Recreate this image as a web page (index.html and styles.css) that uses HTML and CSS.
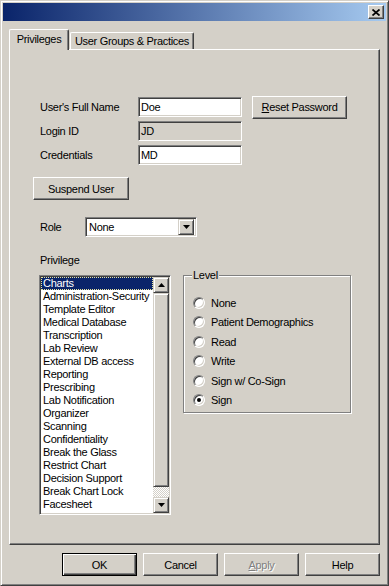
FILE: index.html
```html
<!DOCTYPE html>
<html lang="en">
<head>
    <meta charset="UTF-8">
    <title>User Properties</title>
    <link rel="stylesheet" href="styles.css">
</head>
<body>
    <div class="window">
        <!-- Title bar -->
        <div class="titlebar">
            <button class="close-btn">
                <svg width="8" height="7" viewBox="0 0 8 7"><path d="M0.5 0.5 L7.5 6.5 M7.5 0.5 L0.5 6.5" stroke="#000" stroke-width="1.7" fill="none"/></svg>
            </button>
        </div>

        <div class="dialog-body">
            <div class="tabs">
                <div class="tab active">Privileges</div>
                <div class="tab">User Groups &amp; Practices</div>
            </div>

            <div class="panel">
                <div class="user-form">
                    <div class="form-row">
                        <label>User's Full Name</label>
                        <div class="field">Doe</div>
                        <button class="btn reset-btn"><u>R</u>eset Password</button>
                    </div>
                    <div class="form-row">
                        <label>Login ID</label>
                        <div class="field readonly">JD</div>
                    </div>
                    <div class="form-row">
                        <label>Credentials</label>
                        <div class="field">MD</div>
                    </div>
                </div>

                <button class="btn suspend-btn">Suspend User</button>

                <div class="role-row">
                    <label>Role</label>
                    <div class="combo">
                        <span class="combo-value">None</span>
                        <span class="combo-arrow">
                            <svg width="7" height="4" viewBox="0 0 7 4"><polygon points="0,0 7,0 3.5,4" fill="#000"/></svg>
                        </span>
                    </div>
                </div>

                <div class="privilege-label">Privilege</div>

                <div class="privilege-row">
                    <div class="listbox">
                        <ul class="list-items">
                            <li class="selected">Charts</li>
                            <li>Administration-Security</li>
                            <li>Template Editor</li>
                            <li>Medical Database</li>
                            <li>Transcription</li>
                            <li>Lab Review</li>
                            <li>External DB access</li>
                            <li>Reporting</li>
                            <li>Prescribing</li>
                            <li>Lab Notification</li>
                            <li>Organizer</li>
                            <li>Scanning</li>
                            <li>Confidentiality</li>
                            <li>Break the Glass</li>
                            <li>Restrict Chart</li>
                            <li>Decision Support</li>
                            <li>Break Chart Lock</li>
                            <li>Facesheet</li>
                            <li>Preferences Manager</li>
                        </ul>
                        <div class="scrollbar">
                            <div class="sb-btn">
                                <svg width="7" height="4" viewBox="0 0 7 4"><polygon points="3.5,0 7,4 0,4" fill="#000"/></svg>
                            </div>
                            <div class="sb-thumb"></div>
                            <div class="sb-track"></div>
                            <div class="sb-btn">
                                <svg width="7" height="4" viewBox="0 0 7 4"><polygon points="0,0 7,0 3.5,4" fill="#000"/></svg>
                            </div>
                        </div>
                    </div>

                    <div class="groupbox">
                        <span class="group-title">Level</span>
                        <div class="radio-item"><span class="radio"></span>None</div>
                        <div class="radio-item"><span class="radio"></span>Patient Demographics</div>
                        <div class="radio-item"><span class="radio"></span>Read</div>
                        <div class="radio-item"><span class="radio"></span>Write</div>
                        <div class="radio-item"><span class="radio"></span>Sign w/ Co-Sign</div>
                        <div class="radio-item"><span class="radio checked"></span>Sign</div>
                    </div>
                </div>
            </div>

            <div class="dialog-buttons">
                <button class="btn dlg-btn default">OK</button>
                <button class="btn dlg-btn">Cancel</button>
                <button class="btn dlg-btn disabled"><u>A</u>pply</button>
                <button class="btn dlg-btn">Help</button>
            </div>
        </div>
    </div>
</body>
</html>
```

FILE: styles.css
```css
body {
    margin: 0;
    padding: 0;
    background: #d4d0c8;
}

.window {
    box-sizing: border-box;
    width: 389px;
    height: 586px;
    padding: 2px;
    background: #d4d0c8;
    border: 1px solid;
    border-color: #d4d0c8 #404040 #404040 #d4d0c8;
    box-shadow: inset 1px 1px #fff, inset -1px -1px #808080;
    font-family: "Liberation Sans", Arial, sans-serif;
    font-size: 11px;
    letter-spacing: -0.3px;
    color: #000;
}

.titlebar {
    height: 18px;
    display: flex;
    justify-content: flex-end;
    align-items: center;
    padding-right: 2px;
    background: linear-gradient(to right, #0a246a, #a6caf0);
}

.close-btn {
    box-sizing: border-box;
    width: 16px;
    height: 14px;
    padding: 0;
    display: flex;
    justify-content: center;
    align-items: center;
    background: #d4d0c8;
    border: 1px solid;
    border-color: #fff #404040 #404040 #fff;
    box-shadow: inset -1px -1px #808080;
}

.dialog-body {
    padding: 8px 6px 0;
}

/* tabs */
.tabs {
    display: flex;
    align-items: flex-end;
    height: 20px;
}

.tab {
    box-sizing: border-box;
    width: 124px;
    height: 17px;
    margin-left: 1px;
    padding-top: 2px;
    line-height: 13px;
    text-align: center;
    border: 1px solid;
    border-bottom: none;
    border-color: #fff #404040 #404040 #fff;
    border-radius: 2px 2px 0 0;
    box-shadow: inset -1px 0 #808080;
}

.tab.active {
    position: relative;
    z-index: 1;
    width: 60px;
    height: 21px;
    margin: 0 0 -1px;
    padding-top: 3px;
    background: #d4d0c8;
}

.panel {
    box-sizing: border-box;
    width: 371px;
    height: 496px;
    border: 1px solid;
    border-color: #fff #404040 #404040 #fff;
    box-shadow: inset -1px -1px #808080;
}

/* buttons */
.btn {
    box-sizing: border-box;
    height: 23px;
    padding: 0;
    background: #d4d0c8;
    color: #000;
    font: inherit;
    letter-spacing: inherit;
    border: 1px solid;
    border-color: #fff #404040 #404040 #fff;
    box-shadow: inset -1px -1px #808080;
}

.btn.default {
    border-color: #000;
    box-shadow: inset 1px 1px #fff, inset -1px -1px #404040, inset -2px -2px #808080;
}

.btn.disabled {
    color: #808080;
    text-shadow: 1px 1px #fff;
}

/* user fields */
.user-form {
    display: flex;
    flex-direction: column;
    gap: 4px;
    margin: 47px 0 0 30px;
}

.form-row {
    display: flex;
    align-items: center;
    height: 20px;
}

.form-row label {
    width: 98px;
}

.field,
.combo {
    box-sizing: border-box;
    height: 20px;
    background: #fff;
    border: 1px solid;
    border-color: #808080 #fff #fff #808080;
    box-shadow: inset 1px 1px #404040, inset -1px -1px #d4d0c8;
}

.field {
    width: 104px;
    padding: 2px 0 0 2px;
    line-height: 14px;
}

.field.readonly {
    background: #d4d0c8;
}

.reset-btn {
    width: 95px;
    margin-left: 10px;
}

.suspend-btn {
    display: block;
    width: 96px;
    margin: 12px 0 0 23px;
}

/* role */
.role-row {
    display: flex;
    align-items: center;
    margin: 17px 0 0 30px;
}

.role-row label {
    width: 45px;
}

.combo {
    width: 112px;
    display: flex;
    align-items: center;
    justify-content: space-between;
    padding: 0 2px 0 3px;
}

.combo-arrow,
.sb-btn {
    box-sizing: border-box;
    width: 16px;
    height: 16px;
    display: flex;
    justify-content: center;
    align-items: center;
    background: #d4d0c8;
    border: 1px solid;
    border-color: #d4d0c8 #404040 #404040 #d4d0c8;
    box-shadow: inset 1px 1px #fff, inset -1px -1px #808080;
}

/* privilege list */
.privilege-label {
    margin: 17px 0 0 30px;
    line-height: 13px;
}

.privilege-row {
    display: flex;
    align-items: flex-start;
    margin: 8px 0 0 29px;
}

.listbox {
    box-sizing: border-box;
    width: 132px;
    height: 240px;
    display: flex;
    background: #fff;
    border: 1px solid;
    border-color: #808080 #fff #fff #808080;
    box-shadow: inset 1px 1px #404040, inset -1px -1px #d4d0c8;
    padding: 1px;
}

.list-items {
    flex: 1;
    margin: 0;
    padding: 0;
    list-style: none;
    overflow: hidden;
    line-height: 13px;
    white-space: nowrap;
}

.list-items li {
    height: 13px;
    padding-left: 2px;
}

.list-items li.selected {
    background: #0a246a;
    color: #fff;
    outline: 1px dotted #e8e4a0;
    outline-offset: -1px;
}

.scrollbar {
    width: 16px;
    display: flex;
    flex-direction: column;
}

.sb-thumb {
    box-sizing: border-box;
    height: 194px;
    background: #d4d0c8;
    border: 1px solid;
    border-color: #d4d0c8 #404040 #404040 #d4d0c8;
    box-shadow: inset 1px 1px #fff, inset -1px -1px #808080;
}

.sb-track {
    height: 10px;
    background: repeating-conic-gradient(#fff 0 25%, #d4d0c8 0 50%) 0 0 / 2px 2px;
}

/* level group */
.groupbox {
    position: relative;
    box-sizing: border-box;
    width: 168px;
    height: 138px;
    margin-left: 12px;
    padding: 17px 0 0 9px;
    border: 1px solid #808080;
    box-shadow: inset 1px 1px #fff, 1px 1px #fff;
}

.group-title {
    position: absolute;
    top: -7px;
    left: 8px;
    padding: 0 1px;
    line-height: 13px;
    background: #d4d0c8;
}

.radio-item {
    display: flex;
    align-items: center;
    gap: 6px;
    height: 19.5px;
}

.radio {
    position: relative;
    box-sizing: border-box;
    width: 12px;
    height: 12px;
    border-radius: 50%;
    background: #fff;
    border: 1px solid;
    border-color: #808080 #fff #fff #808080;
    box-shadow: inset 1px 1px #404040, inset -1px -1px #d4d0c8;
}

.radio.checked::after {
    content: "";
    position: absolute;
    top: 3px;
    left: 3px;
    width: 4px;
    height: 4px;
    border-radius: 50%;
    background: #000;
}

/* bottom buttons */
.dialog-buttons {
    display: flex;
    justify-content: flex-end;
    gap: 6px;
    margin-top: 8px;
}

.dlg-btn {
    width: 75px;
}
```
